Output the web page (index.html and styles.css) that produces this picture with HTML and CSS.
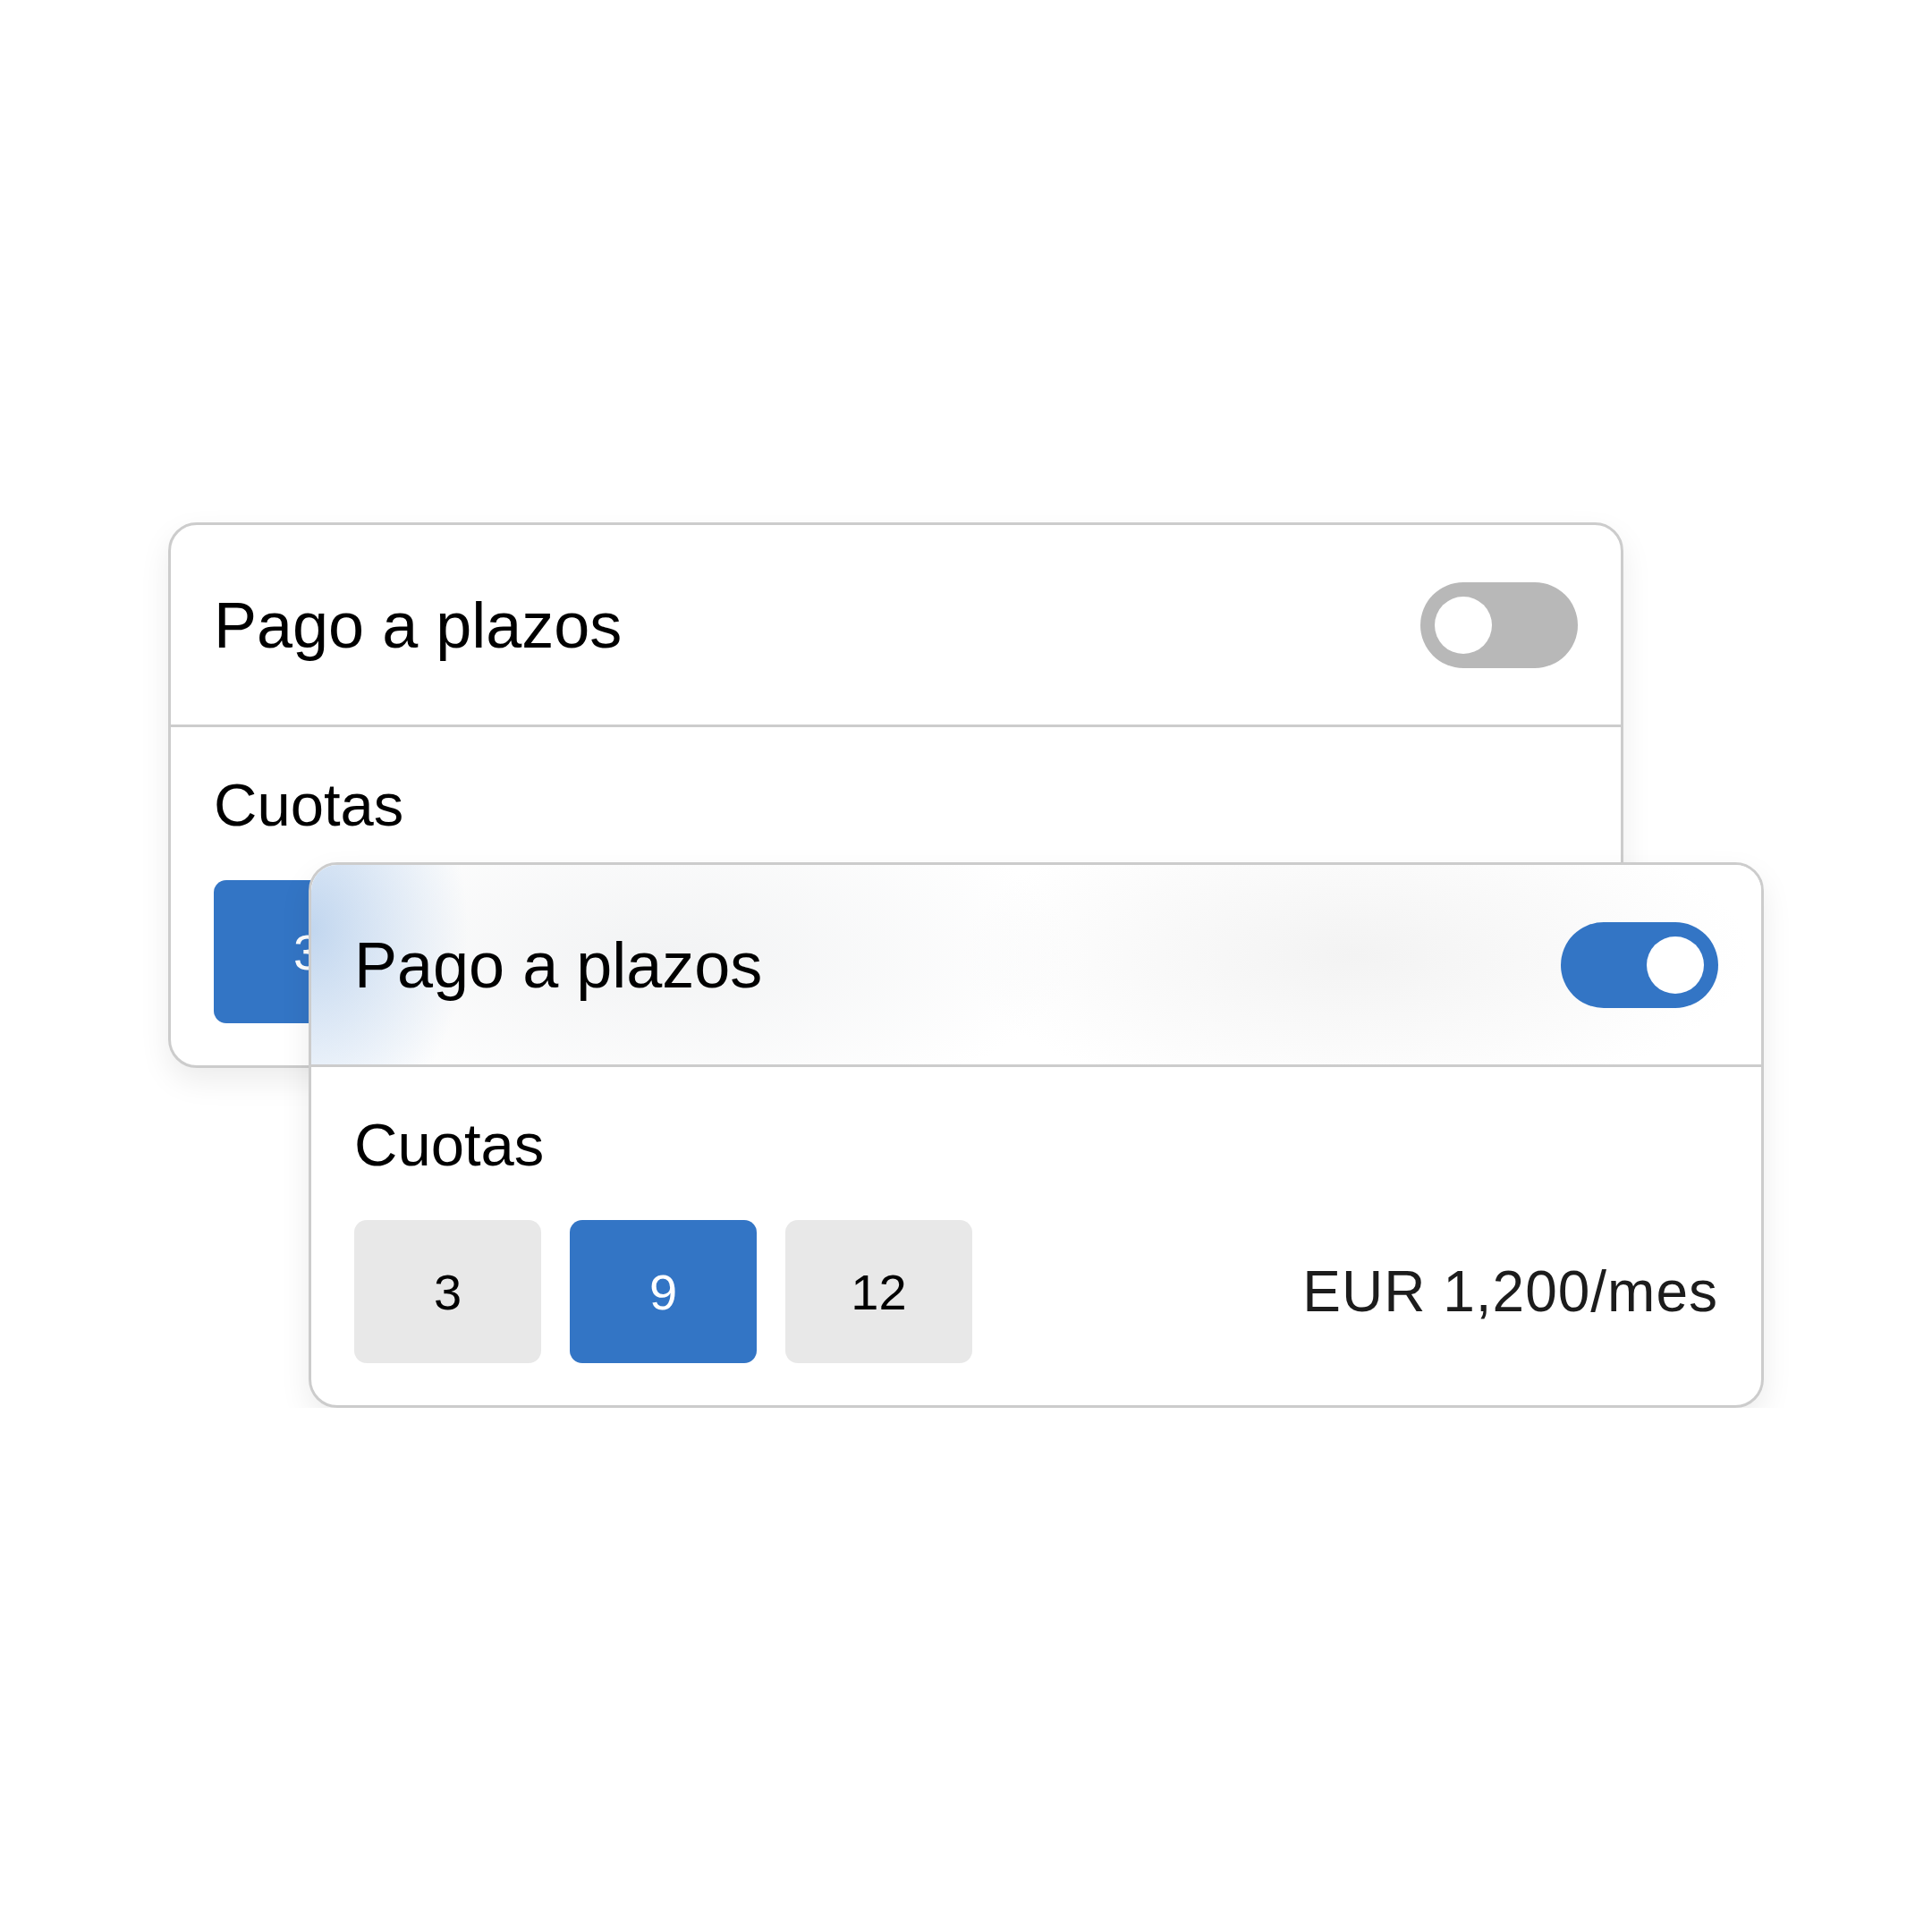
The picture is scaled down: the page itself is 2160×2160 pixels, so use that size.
FILE: index.html
```html
<!DOCTYPE html>
<html lang="es">
<head>
    <meta charset="UTF-8">
    <meta name="viewport" content="width=device-width, initial-scale=1.0">
    <title>Pago a plazos</title>
    <link rel="stylesheet" href="styles.css">
</head>
<body>
    <div class="stage">
        <!-- estado apagado, detrás -->
        <div class="card">
            <div class="card-header">
                <h2>Pago a plazos</h2>
                <span class="toggle"></span>
            </div>
            <div class="card-body">
                <div class="label">Cuotas</div>
                <div class="options">
                    <span class="option selected">3</span>
                    <span class="option">9</span>
                    <span class="option">12</span>
                    <span class="amount">EUR 400/mes</span>
                </div>
            </div>
        </div>

        <!-- estado activo, encima -->
        <div class="card card-front">
            <div class="card-header shine">
                <h2>Pago a plazos</h2>
                <span class="toggle on"></span>
            </div>
            <div class="card-body">
                <div class="label">Cuotas</div>
                <div class="options">
                    <span class="option">3</span>
                    <span class="option selected">9</span>
                    <span class="option">12</span>
                    <span class="amount">EUR 1,200/mes</span>
                </div>
            </div>
        </div>
    </div>
</body>
</html>
```

FILE: styles.css
```css
body {
    margin: 0;
    background-color: white;
    font-family: "Liberation Sans", Arial, sans-serif;
    color: #000;
}
/* both cards share one grid cell, the front one is pushed down-right */
.stage {
    display: grid;
    width: 1784px;
    margin: 584px 0 0 188px;
}
.card {
    grid-area: 1 / 1;
    justify-self: start;
    align-self: start;
    box-sizing: border-box;
    width: 1627px;
    background-color: white;
    border: 3px solid #cccccc;
    border-radius: 32px;
    overflow: hidden;
    box-shadow: 0 14px 34px rgba(0,0,0,0.08);
}
.card-front {
    margin: 380px 0 0 157px;
}
.card-header {
    height: 223px;
    padding: 0 48px;
    display: flex;
    align-items: center;
    justify-content: space-between;
    border-bottom: 3px solid #cccccc;
}
.card-header h2 {
    margin: 0;
    font-size: 72px;
    font-weight: normal;
    line-height: 1;
}
.shine {
    background:
        radial-gradient(ellipse 175px 240px at 0 32%, rgba(190,212,238,0.95), rgba(190,212,238,0) 100%),
        radial-gradient(ellipse 460px 190px at 24% 45%, #f2f3f4, rgba(242,243,244,0) 100%),
        radial-gradient(ellipse 440px 170px at 72% 45%, #f3f3f3, rgba(243,243,243,0) 100%),
        white;
}
.toggle {
    box-sizing: border-box;
    width: 176px;
    height: 96px;
    padding: 16px;
    border-radius: 48px;
    background-color: #b8b8b8;
    display: flex;
}
.toggle::after {
    content: "";
    width: 64px;
    height: 64px;
    border-radius: 50%;
    background-color: white;
}
.toggle.on {
    background-color: #3375c5;
    justify-content: flex-end;
}
.card-body {
    padding: 53px 48px 47px;
}
.label {
    font-size: 67px;
    line-height: 1;
    margin-bottom: 51px;
}
.options {
    display: flex;
    align-items: center;
    gap: 32px;
}
.option {
    width: 209px;
    height: 160px;
    border-radius: 14px;
    background-color: #e8e8e8;
    display: flex;
    align-items: center;
    justify-content: center;
    font-size: 56px;
}
.option.selected {
    background-color: #3375c5;
    color: white;
}
.amount {
    margin-left: auto;
    font-size: 64px;
    letter-spacing: 1px;
    color: #1c1c1c;
}
```
